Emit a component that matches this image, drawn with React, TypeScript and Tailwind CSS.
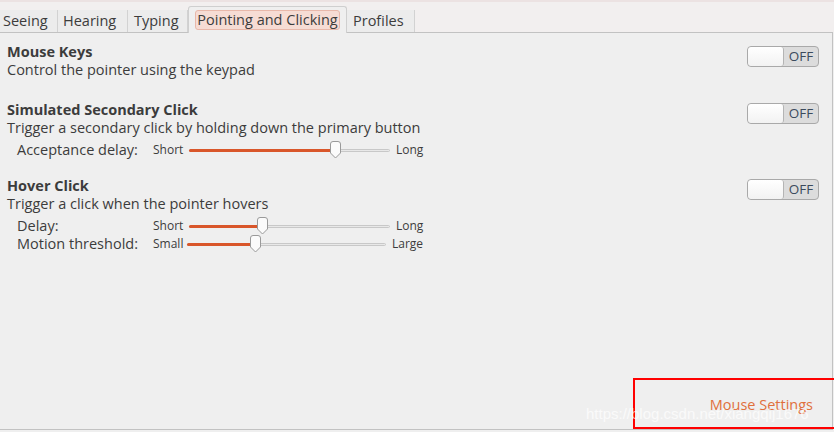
import React from "react";

const font = { fontFamily: '"Open Sans", "DejaVu Sans", sans-serif' };

function Switch() {
  return (
    <div className="flex h-[21px] w-[72px] overflow-hidden rounded-[4px] border border-[#a9a9a9] bg-[#dcdcdc]">
      <div className="h-full w-[36px] rounded-[3px] border-r border-[#b4b4b4] bg-gradient-to-b from-[#ffffff] to-[#f2f2f2]" />
      <div className="flex flex-1 items-center justify-center text-[13.5px] leading-none text-[#3b4a5c]">OFF</div>
    </div>
  );
}

function Slider({ left, right, trackW, pos, labelW }: { left: string; right: string; trackW: number; pos: number; labelW: number }) {
  return (
    <div className="flex items-center">
      <span className="text-[12px] text-[#3c3c3c]" style={{ width: labelW }}>{left}</span>
      <div className="relative h-[18px]" style={{ width: trackW }}>
        <div className="absolute left-0 right-0 top-[8px] h-[3px] rounded-full border border-[#c8c8c8] bg-[#e8e8e8]" />
        <div className="absolute left-0 top-[8px] h-[3px] rounded-full bg-[#d9562a]" style={{ width: pos }} />
        <svg className="absolute top-[0px]" style={{ left: pos - 6 }} width="13" height="18" viewBox="0 0 13 18">
          <path d="M1.5 3 Q1.5 0.5 4 0.5 L9 0.5 Q11.5 0.5 11.5 3 L11.5 12 L6.5 17 L1.5 12 Z" fill="#fbfbfb" stroke="#9a9a9a" strokeWidth="1" />
        </svg>
      </div>
      <span className="ml-[6px] text-[12px] text-[#3c3c3c]">{right}</span>
    </div>
  );
}

export default function App() {
  return (
    <div className="relative h-[432px] w-[834px] overflow-hidden bg-[#efefef] text-[#3c3c3c]" style={font}>
      <div className="h-[2px] bg-[#ece2e2]" />
      {/* tabs */}
      <div className="flex h-[30px] items-end bg-[#f2efef] text-[14.5px]">
        <div className="flex h-[22px] w-[58px] items-center border-r border-[#d2d2d2] bg-[#ececec] pl-[3px]">Seeing</div>
        <div className="flex h-[22px] w-[70px] items-center border-r border-[#d2d2d2] bg-[#ececec] pl-[5px]">Hearing</div>
        <div className="flex h-[22px] w-[60px] items-center border-r border-[#d2d2d2] bg-[#ececec] pl-[6px]">Typing</div>
        <div className="relative z-10 -mb-[1px] flex h-[27px] w-[159px] items-center justify-center rounded-t-[3px] border border-b-0 border-[#cfcfcf] bg-[#efefef]">
          <span className="rounded-[3px] border border-[#e8b8aa] bg-[#f6dcd4] px-[1px] leading-[18px]">Pointing and Clicking</span>
        </div>
        <div className="flex h-[22px] w-[68px] items-center border-r border-[#d2d2d2] bg-[#ececec] pl-[6px]">Profiles</div>
      </div>
      {/* panel */}
      <div className="relative h-[398px] w-[833px] border-r border-t border-b border-[#c2c2c2] bg-[#efefef] pl-[7px] pr-[13px] pt-[10px] text-[14.5px]">
        {/* Mouse Keys */}
        <div className="flex items-start justify-between">
          <div>
            <div className="font-bold leading-[18px]">Mouse Keys</div>
            <div className="leading-[18px]">Control the pointer using the keypad</div>
          </div>
          <div className="mt-[3px]"><Switch /></div>
        </div>
        {/* Simulated Secondary Click */}
        <div className="mt-[22px] flex items-start justify-between">
          <div>
            <div className="font-bold leading-[18px]">Simulated Secondary Click</div>
            <div className="leading-[18px]">Trigger a secondary click by holding down the primary button</div>
            <div className="mt-[4px] flex h-[18px] items-center pl-[10px]">
              <span className="w-[136px]">Acceptance delay:</span>
              <Slider left="Short" right="Long" trackW={201} pos={146} labelW={36} />
            </div>
          </div>
          <div className="mt-[2px]"><Switch /></div>
        </div>
        {/* Hover Click */}
        <div className="mt-[18px] flex items-start justify-between">
          <div>
            <div className="font-bold leading-[18px]">Hover Click</div>
            <div className="leading-[18px]">Trigger a click when the pointer hovers</div>
            <div className="mt-[4px] flex h-[18px] items-center pl-[10px]">
              <span className="w-[136px]">Delay:</span>
              <Slider left="Short" right="Long" trackW={201} pos={73} labelW={36} />
            </div>
            <div className="flex h-[18px] items-center pl-[10px]">
              <span className="w-[136px]">Motion threshold:</span>
              <Slider left="Small" right="Large" trackW={199} pos={68} labelW={34} />
            </div>
          </div>
          <div className="mt-[2px]"><Switch /></div>
        </div>
        {/* Mouse Settings */}
        <div className="absolute bottom-[13px] right-[19px] text-[#e0703c]">Mouse Settings</div>
      </div>
      {/* annotation box */}
      <div className="absolute left-[633px] top-[378px] h-[51px] w-[210px] border-2 border-[#ff0000]" />
      <div className="absolute left-[586px] top-[403px] text-[15px] text-white/70" style={{ fontFamily: '"Liberation Sans", sans-serif' }}>https://blog.csdn.net/xiangqij1676</div>
    </div>
  );
}
